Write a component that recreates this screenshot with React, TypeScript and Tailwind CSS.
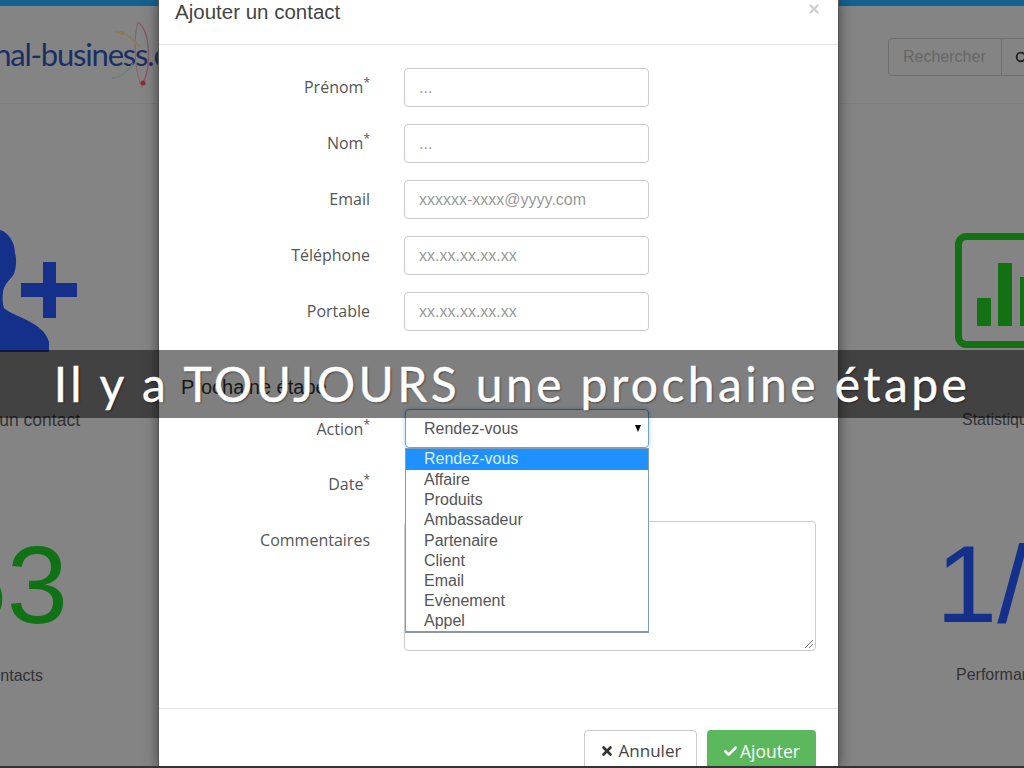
import { Check, X, Search } from "lucide-react";

const sans = "font-['Liberation_Sans',Arial,sans-serif]";
const open = "font-['Open_Sans',sans-serif]";

function Label({ text, star }: { text: string; star?: boolean }) {
  return (
    <div className={`w-[211px] text-right text-[16px] leading-[22px] text-[#555] ${open}`}>
      {text}
      {star && <sup className="text-[12px] leading-none">*</sup>}
    </div>
  );
}

function Row({ label, star, placeholder }: { label: string; star?: boolean; placeholder: string }) {
  return (
    <div className="flex items-center h-[38px] mb-[18px]">
      <Label text={label} star={star} />
      <div className={`ml-[34px] w-[245px] h-[39px] border border-[#ccc] rounded-[4px] pl-[14px] pt-[1px] flex items-center text-[16px] text-[#999] ${sans}`}>
        {placeholder}
      </div>
    </div>
  );
}

const options = ["Rendez-vous", "Affaire", "Produits", "Ambassadeur", "Partenaire", "Client", "Email", "Evènement", "Appel"];

export default function App() {
  return (
    <div className={`relative w-[1024px] h-[768px] overflow-hidden flex bg-[#848484] ${sans}`}>
      {/* left page */}
      <div className="w-[158px] shrink-0 flex flex-col items-end overflow-hidden">
        <div className="relative w-full h-[104px] shrink-0 border-b border-[#7c7c7c] border-t-[6px] border-t-[#14608f]">
          <div className="absolute right-[-9px] top-[30px] text-[31px] leading-[36px] tracking-[-1.2px] text-[#1b2f66] whitespace-nowrap font-['Lato',sans-serif]">
            nal-business.c
          </div>
          <svg className="absolute left-[100px] top-[10px]" width="58" height="84" viewBox="0 0 58 84" fill="none">
            <path d="M38 6 C 50 15, 52 50, 43 67" stroke="#855560" strokeWidth="1.3" />
            <path d="M38 6 C 32 25, 36 65, 43 72" stroke="#856068" strokeWidth="1" />
            <path d="M15 16 C 25 16, 32 22, 40 31" stroke="#8a7c58" strokeWidth="1.3" />
            <path d="M12 62 C 22 62, 28 55, 33 47" stroke="#668080" strokeWidth="1.3" />
            <circle cx="22" cy="17" r="2" fill="#8a7a45" />
            <circle cx="43" cy="67" r="2.5" fill="#8c2a3a" />
          </svg>
        </div>
        <svg className="mt-[126px] shrink-0" width="158" height="122" viewBox="0 0 158 122" fill="#15308a">
          <path d="M0 0 C 8 2, 15 12, 15 23 C 17 30, 16 38, 14 44 C 10 50, 4 54, 3 62 C 2 70, 3 76, 4 78 C 12 86, 44 92, 49 112 L49 122 L0 122 Z" />
          <rect x="43" y="32" width="13" height="56" />
          <rect x="21" y="53" width="56" height="14" />
        </svg>
        <div className="w-full flex justify-end pr-[78px] mt-[58px] text-[17.5px] leading-[20px] text-[#333] whitespace-nowrap">Ajouter un contact</div>
        <div className="w-full flex justify-end pr-[90px] mt-[100px] text-[110px] leading-[110px] text-[#117215] whitespace-nowrap">153</div>
        <div className="w-full flex justify-end pr-[115px] mt-[26px] text-[16px] leading-[20px] text-[#333] whitespace-nowrap">Contacts</div>
      </div>

      {/* modal */}
      <div className="w-[681px] h-[768px] shrink-0 bg-white border-x border-[#555] shadow-[0_0_12px_rgba(0,0,0,0.5)] flex flex-col relative">
        <div className="relative h-[45px] shrink-0 border-b border-[#e5e5e5] pl-[16px] text-[20.5px] leading-[24px] text-[#444]">
          Ajouter un contact
          <X className="absolute right-[17px] top-[2px] text-[#cfcfcf]" size={14} strokeWidth={4} />
        </div>
        <div className="pt-[23px] shrink-0">
          <Row label="Prénom" star placeholder="..." />
          <Row label="Nom" star placeholder="..." />
          <Row label="Email" placeholder="xxxxxx-xxxx@yyyy.com" />
          <Row label="Téléphone" placeholder="xx.xx.xx.xx.xx" />
          <Row label="Portable" placeholder="xx.xx.xx.xx.xx" />
        </div>
        <div className="h-[61px] shrink-0 pl-[22px] flex items-end pb-[9px] text-[20px] leading-[26px] text-[#333]">
          Prochaine étape
        </div>
        <div className="flex items-center shrink-0 h-[39px] mb-[16px] relative">
          <Label text="Action" star />
          <div className="relative ml-[35px] w-[244px] h-[39px] border border-[#6aa3d5] rounded-[4px] shadow-[0_0_4px_rgba(102,175,233,0.6)] pl-[18px] flex items-center text-[16px] text-[#555]">
            Rendez-vous
            <span className="absolute right-[7px] top-[15px] w-0 h-0 border-x-[3.5px] border-x-transparent border-t-[7px] border-t-black" />
          </div>
        </div>
        <div className="flex items-center shrink-0 h-[39px] mb-[18px]">
          <Label text="Date" star />
        </div>
        <div className="flex items-start shrink-0">
          <div className="pt-[8px]"><Label text="Commentaires" /></div>
          <div className="relative ml-[34px] w-[412px] h-[130px] border border-[#ccc] rounded-[4px]">
            <svg className="absolute right-[1px] bottom-[1px]" width="10" height="10" viewBox="0 0 10 10" stroke="#777" fill="none">
              <path d="M1 9 L9 1 M5 9 L9 5" />
            </svg>
          </div>
        </div>
        <div className="mt-[57px] shrink-0 border-t border-[#e5e5e5] pt-[21px] pr-[22px] flex justify-end gap-[10px]">
          <div className={`w-[113px] h-[42px] border border-[#ccc] rounded-[4px] flex items-center justify-center gap-[5px] text-[17px] text-[#444] ${open}`}>
            <X size={14} strokeWidth={4.5} className="text-[#333]" />
            Annuler
          </div>
          <div className={`w-[109px] h-[42px] bg-[#5cb85c] rounded-[4px] flex items-center justify-center gap-[2px] text-[17.5px] text-white ${open}`}>
            <Check size={15} strokeWidth={4.5} />
            Ajouter
          </div>
        </div>

        {/* open dropdown */}
        <div className="absolute left-[246px] top-[448px] w-[244px] h-[185px] bg-white border border-[#7f9db9] border-b-2 border-b-[#8a97a5] text-[16px] leading-[20.2px] text-[#555]">
          {options.map((o, i) => (
            <div key={o} className={i === 0 ? "pl-[18px] h-[21px] bg-[#1e90ff] text-[#dff0ff]" : "pl-[18px]"}>{o}</div>
          ))}
        </div>
      </div>

      {/* right page */}
      <div className="flex-1 min-w-0 overflow-hidden flex flex-col">
        <div className="h-[104px] shrink-0 border-b border-[#7c7c7c] border-t-[6px] border-t-[#14608f] pt-[32px] pl-[49px] flex items-start">
          <div className="w-[114px] h-[38px] shrink-0 border border-[#6e6e6e] rounded-l-[4px] pl-[14px] flex items-center text-[16px] text-[#666]">Rechercher</div>
          <div className="w-[60px] h-[38px] shrink-0 border border-[#6e6e6e] border-l-0 pl-[13px] flex items-center text-[#222]">
            <Search size={13} strokeWidth={3.5} />
          </div>
        </div>
        <svg className="ml-[116px] mt-[129px] shrink-0" width="90" height="116" viewBox="0 0 90 116" fill="#137013">
          <rect x="3.5" y="3.5" width="110" height="108" rx="8" fill="none" stroke="#137013" strokeWidth="7" />
          <rect x="22" y="65" width="14" height="28" />
          <rect x="43" y="30" width="14" height="63" />
          <rect x="65" y="44" width="14" height="49" />
        </svg>
        <div className="ml-[123px] mt-[61px] text-[16px] leading-[20px] text-[#333] whitespace-nowrap">Statistiques</div>
        <div className="ml-[97px] mt-[99px] text-[110px] leading-[110px] text-[#15308a] whitespace-nowrap">1/5</div>
        <div className="ml-[117px] mt-[26px] text-[16px] leading-[20px] text-[#333] whitespace-nowrap">Performance</div>
      </div>

      {/* caption band */}
      <div className="absolute left-0 right-0 top-[350px] h-[68px] bg-black/50 flex items-center justify-center">
        <span className="text-[48px] leading-[68px] tracking-[3.4px] text-white whitespace-nowrap font-['Lato',sans-serif] [-webkit-text-stroke:0.4px_white] [text-shadow:1px_1px_2px_rgba(0,0,0,0.5)]">
          Il y a TOUJOURS une prochaine étape
        </span>
      </div>

      <div className="absolute left-0 right-0 bottom-0 h-[2px] bg-[#333]" />
    </div>
  );
}
